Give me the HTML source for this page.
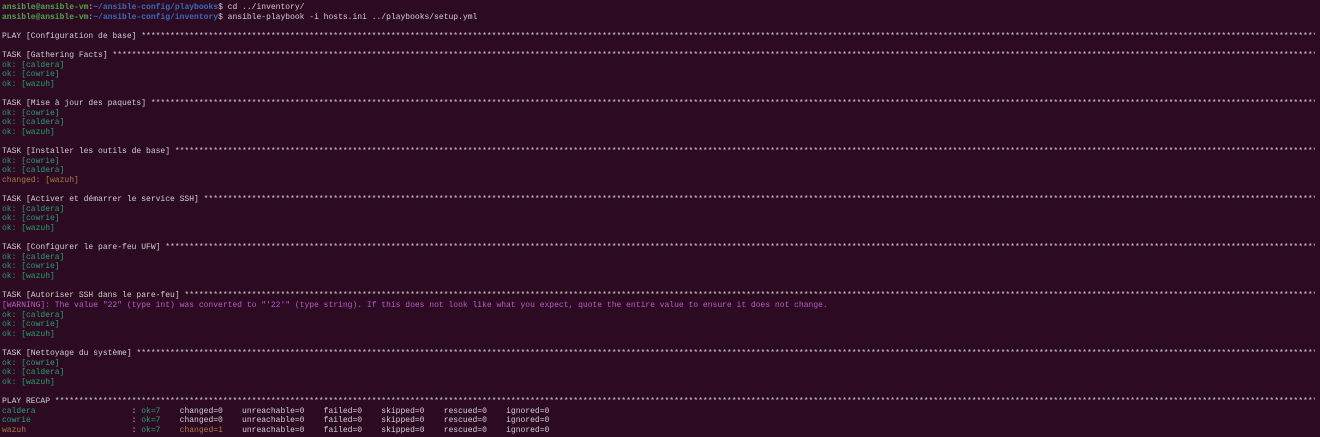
<!DOCTYPE html>
<html><head><meta charset="utf-8"><style>
html,body{margin:0;padding:0;background:#2c0a22;width:1320px;height:437px;overflow:hidden}
pre{margin:0;position:absolute;left:2px;top:3px;width:1313px;overflow:hidden;font-family:"Liberation Mono",monospace;font-size:8px;line-height:9.61px;color:#d0d0d0;white-space:pre}
.u{color:#4ea64b;font-weight:bold}.p{color:#3a6cb8;font-weight:bold}
.g{color:#2aa06a}.c{color:#b07a45}.w{color:#b85cc9}
</style></head><body>
<pre id="t"></pre>
<script>
var S="*".repeat(300);
var L=[
'<span class="u">ansible@ansible-vm</span>:<span class="p">~/ansible-config/playbooks</span>$ cd ../inventory/',
'<span class="u">ansible@ansible-vm</span>:<span class="p">~/ansible-config/inventory</span>$ ansible-playbook -i hosts.ini ../playbooks/setup.yml',
'',
'PLAY [Configuration de base] '+S,
'',
'TASK [Gathering Facts] '+S,
'<span class="g">ok: [caldera]</span>','<span class="g">ok: [cowrie]</span>','<span class="g">ok: [wazuh]</span>',
'',
'TASK [Mise à jour des paquets] '+S,
'<span class="g">ok: [cowrie]</span>','<span class="g">ok: [caldera]</span>','<span class="g">ok: [wazuh]</span>',
'',
'TASK [Installer les outils de base] '+S,
'<span class="g">ok: [cowrie]</span>','<span class="g">ok: [caldera]</span>','<span class="c">changed: [wazuh]</span>',
'',
'TASK [Activer et démarrer le service SSH] '+S,
'<span class="g">ok: [caldera]</span>','<span class="g">ok: [cowrie]</span>','<span class="g">ok: [wazuh]</span>',
'',
'TASK [Configurer le pare-feu UFW] '+S,
'<span class="g">ok: [caldera]</span>','<span class="g">ok: [cowrie]</span>','<span class="g">ok: [wazuh]</span>',
'',
'TASK [Autoriser SSH dans le pare-feu] '+S,
'<span class="w">[WARNING]: The value "22" (type int) was converted to "\'22\'" (type string). If this does not look like what you expect, quote the entire value to ensure it does not change.</span>',
'<span class="g">ok: [caldera]</span>','<span class="g">ok: [cowrie]</span>','<span class="g">ok: [wazuh]</span>',
'',
'TASK [Nettoyage du système] '+S,
'<span class="g">ok: [cowrie]</span>','<span class="g">ok: [caldera]</span>','<span class="g">ok: [wazuh]</span>',
'',
'PLAY RECAP '+S,
'<span class="g">caldera                   </span> : <span class="g">ok=7   </span> changed=0    unreachable=0    failed=0    skipped=0    rescued=0    ignored=0',
'<span class="g">cowrie                    </span> : <span class="g">ok=7   </span> changed=0    unreachable=0    failed=0    skipped=0    rescued=0    ignored=0',
'<span class="c">wazuh                     </span> : <span class="g">ok=7   </span> <span class="c">changed=1   </span> unreachable=0    failed=0    skipped=0    rescued=0    ignored=0'
];
document.getElementById('t').innerHTML=L.join('\n');
</script>
</body></html>
